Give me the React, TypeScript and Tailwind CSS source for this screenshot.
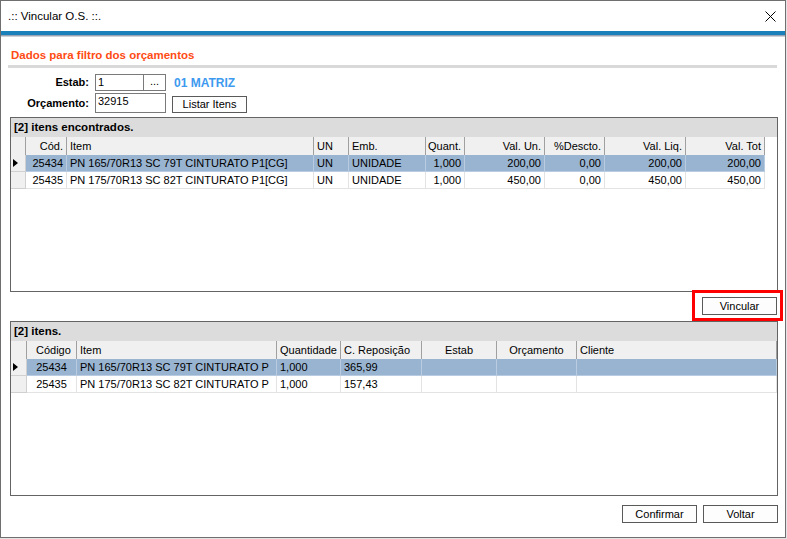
import React from "react";

type Col = { label: string; w: number; head: "left" | "right" | "center"; cell: "left" | "right" | "center"; hp?: string };

const font = { fontFamily: '"Liberation Sans", Arial, sans-serif' };

const alignCls = {
  left: "justify-start pl-[3px]",
  right: "justify-end pr-[3px]",
  center: "justify-center",
};

const itemsCols: Col[] = [
  { label: "Cód.", w: 41, head: "right", cell: "right" },
  { label: "Item", w: 247, head: "left", cell: "left" },
  { label: "UN", w: 35, head: "left", cell: "left" },
  { label: "Emb.", w: 77, head: "left", cell: "left" },
  { label: "Quant.", w: 39, head: "right", cell: "right" },
  { label: "Val. Un.", w: 80, head: "right", cell: "right" },
  { label: "%Descto.", w: 60, head: "right", cell: "right" },
  { label: "Val. Liq.", w: 81, head: "right", cell: "right" },
  { label: "Val. Tot", w: 79, head: "right", cell: "right" },
];

const itemsRows = [
  ["25434", "PN 165/70R13 SC 79T CINTURATO P1[CG]", "UN", "UNIDADE", "1,000", "200,00", "0,00", "200,00", "200,00"],
  ["25435", "PN 175/70R13 SC 82T CINTURATO P1[CG]", "UN", "UNIDADE", "1,000", "450,00", "0,00", "450,00", "450,00"],
];

const linkCols: Col[] = [
  { label: "Código", w: 50, head: "left", cell: "center", hp: "pl-[9px]" },
  { label: "Item", w: 200, head: "left", cell: "left" },
  { label: "Quantidade", w: 64, head: "left", cell: "left" },
  { label: "C. Reposição", w: 81, head: "left", cell: "left" },
  { label: "Estab", w: 75, head: "center", cell: "left" },
  { label: "Orçamento", w: 80, head: "center", cell: "left" },
  { label: "Cliente", w: 200, head: "left", cell: "left" },
];

const linkRows = [
  ["25434", "PN 165/70R13 SC 79T CINTURATO P", "1,000", "365,99", "", "", ""],
  ["25435", "PN 175/70R13 SC 82T CINTURATO P", "1,000", "157,43", "", "", ""],
];

function RowArrow() {
  return (
    <svg width="5" height="8" viewBox="0 0 5 8">
      <polygon points="0,0 5,4 0,8" fill="#000" />
    </svg>
  );
}

function Grid({ title, cols, rows, rowHeadW }: { title: string; cols: Col[]; rows: string[][]; rowHeadW: number }) {
  return (
    <div className="w-[768px] h-[175px] border border-[#646464] bg-white flex flex-col overflow-hidden">
      <div className="h-[19px] bg-[#dcdcdc] flex items-center pl-[3px] text-[11.5px] font-bold text-black">{title}</div>
      <div className="flex h-[18px]">
        <div className="h-full bg-[#f0f0f0] border-r border-[#a0a0a0]" style={{ width: rowHeadW }} />
        {cols.map((c) => (
          <div
            key={c.label}
            className={`h-full bg-[#f0f0f0] border-r border-[#a0a0a0] flex items-center text-[11px] whitespace-nowrap overflow-hidden ${c.hp ?? alignCls[c.head]}`}
            style={{ width: c.w }}
          >
            {c.label}
          </div>
        ))}
      </div>
      {rows.map((r, i) => (
        <div key={i} className="flex h-[17px]">
          <div
            className="h-full bg-[#f0f0f0] border-r border-b border-[#d0d0d0] flex items-center pl-[2px]"
            style={{ width: rowHeadW }}
          >
            {i === 0 && <RowArrow />}
          </div>
          {cols.map((c, j) => (
            <div
              key={j}
              className={`h-full border-r border-b flex items-center text-[11px] whitespace-nowrap overflow-hidden ${
                i === 0 ? "bg-[#99b4d1] border-[#b9cbe0]" : "bg-white border-[#e3e3e3]"
              } ${alignCls[c.cell]}`}
              style={{ width: c.w }}
            >
              {r[j]}
            </div>
          ))}
        </div>
      ))}
    </div>
  );
}

function Btn({ children, w, h = 18 }: { children: React.ReactNode; w: number; h?: number }) {
  return (
    <div
      className="border border-[#5a5a5a] bg-[#fdfdfd] flex items-center justify-center text-[11px] text-black"
      style={{ width: w, height: h }}
    >
      {children}
    </div>
  );
}

export default function App() {
  return (
    <div className="w-[787px] h-[539px] bg-[#e4e4e4] overflow-hidden text-black" style={font}>
      <div className="w-[786px] h-[538px] border border-[#6f6f6f] bg-white flex flex-col">
        {/* title bar */}
        <div className="h-[30px] flex items-center justify-between pl-[7px] pr-[9px]">
          <span className="text-[11.5px] pt-[1px]">.:: Vincular O.S. ::.</span>
          <svg width="11" height="11" viewBox="0 0 11 11">
            <path d="M0.5 0.5 L10.5 10.5 M10.5 0.5 L0.5 10.5" stroke="#000" strokeWidth="1" />
          </svg>
        </div>
        <div className="h-[4px] bg-[#1a80b9]" />
        <div className="h-[1px] bg-[#98a4b6]" />
        <div className="h-[1px] bg-[#cdd1d8]" />

        <div className="pl-[10px] pt-[12px] text-[11.5px] leading-[13px] font-bold text-[#ff4b14]">
          Dados para filtro dos orçamentos
        </div>
        <div className="ml-[7px] mt-[3px] w-[769px] h-[3px] bg-[#d9d9d9]" />

        {/* Estab */}
        <div className="flex items-center mt-[6px] h-[17px]">
          <div className="w-[88px] text-right text-[11px] font-bold">Estab:</div>
          <div className="ml-[6px] w-[49px] h-[17px] border border-[#7a7a7a] text-[11px] pl-[2px] leading-[15px]">1</div>
          <div className="w-[22px] h-[17px] border border-l-0 border-[#7a7a7a] flex items-center justify-center text-[11px] leading-none pb-[3px]">...</div>
          <div className="ml-[8px] text-[12px] font-bold text-[#3d9aef]">01 MATRIZ</div>
        </div>

        {/* Orçamento */}
        <div className="flex items-center mt-[2px] h-[20px]">
          <div className="w-[88px] text-right text-[11px] font-bold">Orçamento:</div>
          <div className="ml-[6px] self-start w-[71px] h-[20px] border border-[#7a7a7a] text-[11px] pl-[2px] leading-[15px]">32915</div>
          <div className="ml-[6px] mt-[2px]">
            <Btn w={75} h={17}>Listar Itens</Btn>
          </div>
        </div>

        <div className="ml-[9px] mt-[4px]">
          <Grid title="[2] itens encontrados." cols={itemsCols} rows={itemsRows} rowHeadW={15} />
        </div>

        {/* Vincular */}
        <div className="ml-[701px] mt-[5px] relative w-[75px]">
          <Btn w={75} h={18}>Vincular</Btn>
          <div className="absolute left-[-10px] top-[-7px] w-[91px] h-[31px] border-[3px] border-[#ff0000]" />
        </div>

        <div className="ml-[9px] mt-[6px]">
          <Grid title="[2] itens." cols={linkCols} rows={linkRows} rowHeadW={16} />
        </div>

        <div className="flex ml-[621px] mt-[9px] gap-[6px]">
          <Btn w={75}>Confirmar</Btn>
          <Btn w={75}>Voltar</Btn>
        </div>
      </div>
    </div>
  );
}
